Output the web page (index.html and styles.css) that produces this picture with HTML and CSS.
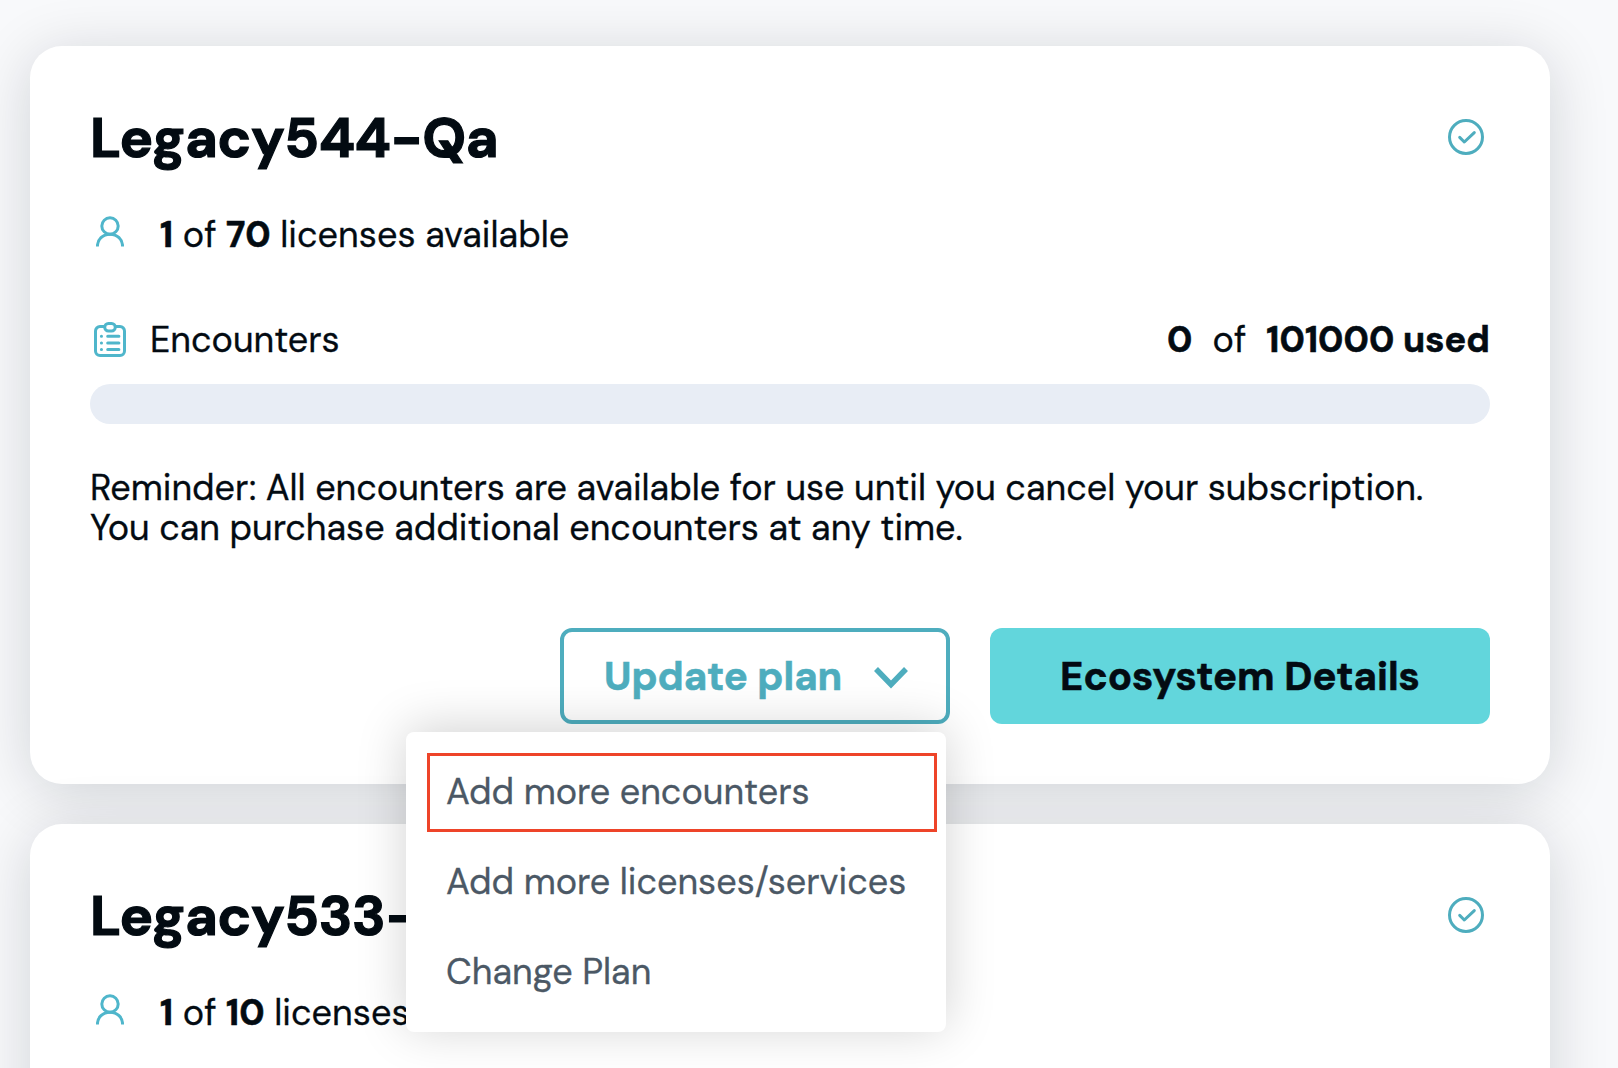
FILE: index.html
```html
<!DOCTYPE html>
<html lang="en">
<head>
<meta charset="utf-8">
<title>Ecosystems</title>
<link rel="stylesheet" href="styles.css">
</head>
<body>
<main class="list">
  <section class="card">
    <header class="card-head">
      <h2 class="title">Legacy544-Qa</h2>
      <svg class="check" viewBox="0 0 36 36"><circle cx="18" cy="18" r="16.5"/><path d="M11.7 18.4l4.6 4.6 10-9.4"/></svg>
    </header>
    <div class="licenses">
      <svg class="user" viewBox="0 0 28 31"><circle cx="14" cy="10" r="8.2"/><path d="M1.4 30.5c0-7.2 5.4-12.2 12.6-12.2s12.6 5 12.6 12.2"/></svg>
      <p class="license-text"><b>1</b> of <b>70</b> licenses available</p>
    </div>
    <div class="usage">
      <svg class="clipboard" viewBox="0 0 32 35"><path d="M10.5 4.5H6A4.5 4.5 0 0 0 1.5 9v20A4.5 4.5 0 0 0 6 33.5h20a4.5 4.5 0 0 0 4.5-4.5V9A4.5 4.5 0 0 0 26 4.5h-4.5"/><rect x="10.7" y="1.5" width="10.6" height="7.5" rx="3.7"/><path d="M13.7 14.3h11.2M13.7 21h11.2M13.7 27.5h11.2M7.4 14.3h.1M7.4 21h.1M7.4 27.5h.1"/></svg>
      <span class="usage-label">Encounters</span>
      <span class="usage-count"><b>0</b><span>of</span><b>101000 used</b></span>
    </div>
    <div class="progress"></div>
    <p class="reminder">Reminder: All encounters are available for use until you cancel your subscription.<br>You can purchase additional encounters at any time.</p>
    <div class="actions">
      <div class="dropdown">
        <button class="btn btn-outline">Update plan<svg class="chevron" viewBox="0 0 34 22"><path d="M2 2l15 15.5L32 2"/></svg></button>
        <ul class="menu">
          <li class="item active">Add more encounters</li>
          <li class="item">Add more licenses/services</li>
          <li class="item">Change Plan</li>
        </ul>
      </div>
      <button class="btn btn-primary">Ecosystem Details</button>
    </div>
  </section>
  <section class="card">
    <header class="card-head">
      <h2 class="title">Legacy533-</h2>
      <svg class="check" viewBox="0 0 36 36"><circle cx="18" cy="18" r="16.5"/><path d="M11.7 18.4l4.6 4.6 10-9.4"/></svg>
    </header>
    <div class="licenses">
      <svg class="user" viewBox="0 0 28 31"><circle cx="14" cy="10" r="8.2"/><path d="M1.4 30.5c0-7.2 5.4-12.2 12.6-12.2s12.6 5 12.6 12.2"/></svg>
      <p class="license-text"><b>1</b> of <b>10</b> licenses</p>
    </div>
  </section>
</main>
</body>
</html>
```
FILE: styles.css
```css
* { box-sizing: border-box; }
html { overflow: hidden; }
body {
  margin: 0;
  height: 1068px;
  overflow: hidden;
  background: #f8f9fb;
  color: #030b12;
  font-family: "DM Sans", Inter, sans-serif;
  font-optical-sizing: none;
  font-size: 36px;
  line-height: 40px;
  -webkit-text-stroke: .3px;
}
svg { display: block; flex: none; fill: none; stroke: #4fb6cb; stroke-width: 3; }
p, h2, ul { margin: 0; padding: 0; }
b { -webkit-text-stroke: .6px; }
.list {
  width: 1520px;
  height: 1022px;
  margin: 46px 0 0 30px;
  display: flex;
  flex-direction: column;
  gap: 40px;
}
.card {
  height: 738px;
  flex: none;
  padding: 60px;
  border-radius: 32px;
  background: #fff;
  box-shadow: 0 8px 60px rgba(0, 20, 32, .16);
}
.card-head { display: flex; justify-content: space-between; height: 64px; }
.title { font-size: 56px; line-height: 64px; font-weight: 700; letter-spacing: -.45px; -webkit-text-stroke: 1.2px; white-space: nowrap; }
.check { width: 36px; height: 36px; margin: 13px 6px 0 0; stroke: #4eadbe; stroke-linecap: round; stroke-linejoin: round; }
.licenses { display: flex; align-items: flex-start; height: 60px; margin-top: 44px; }
.user { width: 28px; height: 31px; margin: 2px 0 0 6px; }
.license-text { margin: 1px 0 0 36px; letter-spacing: .04px; white-space: nowrap; }
.usage { display: flex; align-items: flex-start; height: 65px; margin-top: 45px; }
.clipboard { width: 32px; height: 35px; margin: 3px 0 0 4px; stroke-linecap: round; }
.usage-label { margin: 1px 0 0 24px; }
.usage-count { display: flex; gap: 20px; margin: 1px 0 0 auto; letter-spacing: .1px; white-space: nowrap; }
.progress { height: 40px; border-radius: 20px; background: #e8edf5; }
.reminder { margin-top: 44px; letter-spacing: -.02px; white-space: nowrap; }
.actions { display: flex; justify-content: flex-end; gap: 40px; margin-top: 80px; }
.dropdown { position: relative; }
.btn {
  height: 96px;
  display: flex;
  align-items: center;
  justify-content: center;
  border: 0;
  border-radius: 12px;
  font: 700 40px/48px "DM Sans", Inter, sans-serif;
  font-optical-sizing: none;
  -webkit-text-stroke: .6px;
  color: #030b12;
  white-space: nowrap;
}
.btn-outline { width: 390px; justify-content: space-between; padding: 0 38px 0 40px; border: 4px solid #4eadbe; background: #fff; color: #4eadbe; }
.btn-primary { width: 500px; background: #62d6dc; }
.chevron { width: 34px; height: 22px; margin-top: 4px; stroke: #4eadbe; stroke-width: 5.5; }
.menu {
  position: absolute;
  z-index: 1;
  top: 104px;
  right: 4px;
  width: 540px;
  height: 300px;
  padding: 21px 9px 0 21px;
  list-style: none;
  border-radius: 8px;
  background: #fff;
  box-shadow: 0 -4px 50px rgba(0, 0, 0, .18);
  color: #4b5865;
  white-space: nowrap;
}
.item { height: 90px; padding: 18px 0 0 19px; }
.active { height: 79px; margin-bottom: 11.5px; padding: 15.5px 0 0 16px; border: 3px solid #ee4429; }
```
